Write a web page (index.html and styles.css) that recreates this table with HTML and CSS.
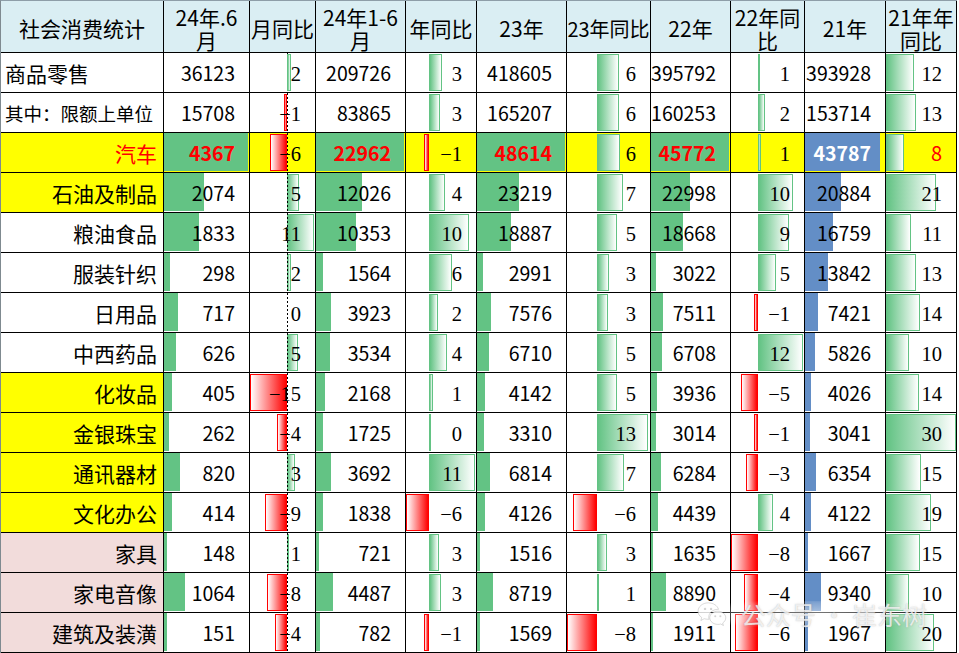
FILE: index.html
```html
<!DOCTYPE html>
<html lang="zh">
<head>
<meta charset="utf-8">
<title>社会消费统计</title>
<link rel="stylesheet" href="styles.css">
</head>
<body>
<div class="sheet">
  <div class="c hd">社会消费统计</div>
  <div class="c hd two">24年.6<br>月</div>
  <div class="c hd">月同比</div>
  <div class="c hd two">24年1-6<br>月</div>
  <div class="c hd">年同比</div>
  <div class="c hd">23年</div>
  <div class="c hd sm">23年同比</div>
  <div class="c hd">22年</div>
  <div class="c hd two">22年同<br>比</div>
  <div class="c hd">21年</div>
  <div class="c hd two">21年年<br>同比</div>

  <!-- 商品零售 -->
  <div class="c cat l">商品零售</div>
  <div class="c num"><span class="v">36123</span></div>
  <div class="c pct"><i class="ax"></i><i class="db pos" style="margin-left:37px;width:4px"></i><span class="v">2</span></div>
  <div class="c num"><span class="v">209726</span></div>
  <div class="c pct"><i class="db pos" style="margin-left:23px;width:13px"></i><span class="v">3</span></div>
  <div class="c num"><span class="v">418605</span></div>
  <div class="c pct"><i class="db pos" style="margin-left:30px;width:22px"></i><span class="v">6</span></div>
  <div class="c num"><span class="v">395792</span></div>
  <div class="c pct"><i class="db pos" style="margin-left:27px;width:2px"></i><span class="v">1</span></div>
  <div class="c num"><span class="v">393928</span></div>
  <div class="c pct"><i class="db pos" style="margin-left:0;width:28px"></i><span class="v">12</span></div>

  <!-- 其中：限额上单位 -->
  <div class="c cat l small">其中：限额上单位</div>
  <div class="c num"><span class="v">15708</span></div>
  <div class="c pct"><i class="db neg" style="margin-left:34px;width:3px"></i><i class="ax"></i><span class="v">−1</span></div>
  <div class="c num"><span class="v">83865</span></div>
  <div class="c pct"><i class="db pos" style="margin-left:23px;width:11px"></i><span class="v">3</span></div>
  <div class="c num"><span class="v">165207</span></div>
  <div class="c pct"><i class="db pos" style="margin-left:30px;width:22px"></i><span class="v">6</span></div>
  <div class="c num"><span class="v">160253</span></div>
  <div class="c pct"><i class="db pos" style="margin-left:27px;width:7px"></i><span class="v">2</span></div>
  <div class="c num"><span class="v">153714</span></div>
  <div class="c pct"><i class="db pos" style="margin-left:0;width:30px"></i><span class="v">13</span></div>

  <!-- 汽车 -->
  <div class="c cat car">汽车</div>
  <div class="c num car"><i class="bar g" style="width:84px"></i><span class="v red">4367</span></div>
  <div class="c pct car"><i class="db neg" style="margin-left:20px;width:17px"></i><i class="ax"></i><span class="v">−6</span></div>
  <div class="c num car"><i class="bar g" style="width:88px"></i><span class="v red">22962</span></div>
  <div class="c pct car"><i class="db neg" style="margin-left:18px;width:5px"></i><span class="v">−1</span></div>
  <div class="c num car"><i class="bar g" style="width:88px"></i><span class="v red">48614</span></div>
  <div class="c pct car"><i class="db pos" style="margin-left:30px;width:23px"></i><span class="v">6</span></div>
  <div class="c num car"><i class="bar g" style="width:78px"></i><span class="v red">45772</span></div>
  <div class="c pct car"><i class="db pos" style="margin-left:27px;width:3px"></i><span class="v">1</span></div>
  <div class="c num car"><i class="bar b" style="width:75px"></i><span class="v wht">43787</span></div>
  <div class="c pct car"><i class="db pos" style="margin-left:0;width:18px"></i><span class="v sans red">8</span></div>

  <!-- 石油及制品 -->
  <div class="c cat y">石油及制品</div>
  <div class="c num"><i class="bar g" style="width:40px"></i><span class="v">2074</span></div>
  <div class="c pct"><i class="db pos" style="margin-left:37px;width:12px"></i><i class="ax"></i><span class="v">5</span></div>
  <div class="c num"><i class="bar g" style="width:46px"></i><span class="v">12026</span></div>
  <div class="c pct"><i class="db pos" style="margin-left:23px;width:16px"></i><span class="v">4</span></div>
  <div class="c num"><i class="bar g" style="width:42px"></i><span class="v">23219</span></div>
  <div class="c pct"><i class="db pos" style="margin-left:30px;width:26px"></i><span class="v">7</span></div>
  <div class="c num"><i class="bar g" style="width:39px"></i><span class="v">22998</span></div>
  <div class="c pct"><i class="db pos" style="margin-left:27px;width:35px"></i><span class="v">10</span></div>
  <div class="c num"><i class="bar b" style="width:36px"></i><span class="v">20884</span></div>
  <div class="c pct"><i class="db pos" style="margin-left:0;width:50px"></i><span class="v">21</span></div>

  <!-- 粮油食品 -->
  <div class="c cat">粮油食品</div>
  <div class="c num"><i class="bar g" style="width:35px"></i><span class="v">1833</span></div>
  <div class="c pct"><i class="db pos" style="margin-left:37px;width:27px"></i><i class="ax"></i><span class="v">11</span></div>
  <div class="c num"><i class="bar g" style="width:40px"></i><span class="v">10353</span></div>
  <div class="c pct"><i class="db pos" style="margin-left:23px;width:40px"></i><span class="v">10</span></div>
  <div class="c num"><i class="bar g" style="width:34px"></i><span class="v">18887</span></div>
  <div class="c pct"><i class="db pos" style="margin-left:30px;width:20px"></i><span class="v">5</span></div>
  <div class="c num"><i class="bar g" style="width:32px"></i><span class="v">18668</span></div>
  <div class="c pct"><i class="db pos" style="margin-left:27px;width:31px"></i><span class="v">9</span></div>
  <div class="c num"><i class="bar b" style="width:28px"></i><span class="v">16759</span></div>
  <div class="c pct"><i class="db pos" style="margin-left:0;width:25px"></i><span class="v">11</span></div>

  <!-- 服装针织 -->
  <div class="c cat">服装针织</div>
  <div class="c num"><i class="bar g" style="width:6px"></i><span class="v">298</span></div>
  <div class="c pct"><i class="db pos" style="margin-left:37px;width:4px"></i><i class="ax"></i><span class="v">2</span></div>
  <div class="c num"><i class="bar g" style="width:7px"></i><span class="v">1564</span></div>
  <div class="c pct"><i class="db pos" style="margin-left:23px;width:23px"></i><span class="v">6</span></div>
  <div class="c num"><i class="bar g" style="width:6px"></i><span class="v">2991</span></div>
  <div class="c pct"><i class="db pos" style="margin-left:30px;width:12px"></i><span class="v">3</span></div>
  <div class="c num"><i class="bar g" style="width:5px"></i><span class="v">3022</span></div>
  <div class="c pct"><i class="db pos" style="margin-left:27px;width:18px"></i><span class="v">5</span></div>
  <div class="c num"><i class="bar b" style="width:23px"></i><span class="v">13842</span></div>
  <div class="c pct"><i class="db pos" style="margin-left:0;width:30px"></i><span class="v">13</span></div>

  <!-- 日用品 -->
  <div class="c cat">日用品</div>
  <div class="c num"><i class="bar g" style="width:14px"></i><span class="v">717</span></div>
  <div class="c pct"><i class="ax"></i><span class="v">0</span></div>
  <div class="c num"><i class="bar g" style="width:15px"></i><span class="v">3923</span></div>
  <div class="c pct"><i class="db pos" style="margin-left:23px;width:9px"></i><span class="v">2</span></div>
  <div class="c num"><i class="bar g" style="width:14px"></i><span class="v">7576</span></div>
  <div class="c pct"><i class="db pos" style="margin-left:30px;width:11px"></i><span class="v">3</span></div>
  <div class="c num"><i class="bar g" style="width:12px"></i><span class="v">7511</span></div>
  <div class="c pct"><i class="db neg" style="margin-left:23px;width:4px"></i><span class="v">−1</span></div>
  <div class="c num"><i class="bar b" style="width:13px"></i><span class="v">7421</span></div>
  <div class="c pct"><i class="db pos" style="margin-left:0;width:34px"></i><span class="v">14</span></div>

  <!-- 中西药品 -->
  <div class="c cat">中西药品</div>
  <div class="c num"><i class="bar g" style="width:12px"></i><span class="v">626</span></div>
  <div class="c pct"><i class="db pos" style="margin-left:37px;width:11px"></i><i class="ax"></i><span class="v">5</span></div>
  <div class="c num"><i class="bar g" style="width:14px"></i><span class="v">3534</span></div>
  <div class="c pct"><i class="db pos" style="margin-left:23px;width:18px"></i><span class="v">4</span></div>
  <div class="c num"><i class="bar g" style="width:12px"></i><span class="v">6710</span></div>
  <div class="c pct"><i class="db pos" style="margin-left:30px;width:20px"></i><span class="v">5</span></div>
  <div class="c num"><i class="bar g" style="width:11px"></i><span class="v">6708</span></div>
  <div class="c pct"><i class="db pos" style="margin-left:27px;width:45px"></i><span class="v">12</span></div>
  <div class="c num"><i class="bar b" style="width:10px"></i><span class="v">5826</span></div>
  <div class="c pct"><i class="db pos" style="margin-left:0;width:23px"></i><span class="v">10</span></div>

  <!-- 化妆品 -->
  <div class="c cat y">化妆品</div>
  <div class="c num"><i class="bar g" style="width:8px"></i><span class="v">405</span></div>
  <div class="c pct"><i class="db neg" style="margin-left:0;width:37px"></i><i class="ax"></i><span class="v">−15</span></div>
  <div class="c num"><i class="bar g" style="width:9px"></i><span class="v">2168</span></div>
  <div class="c pct"><i class="db pos" style="margin-left:23px;width:4px"></i><span class="v">1</span></div>
  <div class="c num"><i class="bar g" style="width:8px"></i><span class="v">4142</span></div>
  <div class="c pct"><i class="db pos" style="margin-left:30px;width:20px"></i><span class="v">5</span></div>
  <div class="c num"><i class="bar g" style="width:6px"></i><span class="v">3936</span></div>
  <div class="c pct"><i class="db neg" style="margin-left:10px;width:17px"></i><span class="v">−5</span></div>
  <div class="c num"><i class="bar b" style="width:6px"></i><span class="v">4026</span></div>
  <div class="c pct"><i class="db pos" style="margin-left:0;width:33px"></i><span class="v">14</span></div>

  <!-- 金银珠宝 -->
  <div class="c cat y">金银珠宝</div>
  <div class="c num"><i class="bar g" style="width:5px"></i><span class="v">262</span></div>
  <div class="c pct"><i class="db neg" style="margin-left:27px;width:10px"></i><i class="ax"></i><span class="v">−4</span></div>
  <div class="c num"><i class="bar g" style="width:7px"></i><span class="v">1725</span></div>
  <div class="c pct"><i class="db pos" style="margin-left:23px;width:1px"></i><span class="v">0</span></div>
  <div class="c num"><i class="bar g" style="width:7px"></i><span class="v">3310</span></div>
  <div class="c pct"><i class="db pos" style="margin-left:30px;width:51px"></i><span class="v">13</span></div>
  <div class="c num"><i class="bar g" style="width:5px"></i><span class="v">3014</span></div>
  <div class="c pct"><i class="db neg" style="margin-left:23px;width:4px"></i><span class="v">−1</span></div>
  <div class="c num"><i class="bar b" style="width:5px"></i><span class="v">3041</span></div>
  <div class="c pct"><i class="db pos" style="margin-left:0;width:70px"></i><span class="v">30</span></div>

  <!-- 通讯器材 -->
  <div class="c cat y">通讯器材</div>
  <div class="c num"><i class="bar g" style="width:16px"></i><span class="v">820</span></div>
  <div class="c pct"><i class="db pos" style="margin-left:37px;width:8px"></i><i class="ax"></i><span class="v">3</span></div>
  <div class="c num"><i class="bar g" style="width:15px"></i><span class="v">3692</span></div>
  <div class="c pct"><i class="db pos" style="margin-left:23px;width:46px"></i><span class="v">11</span></div>
  <div class="c num"><i class="bar g" style="width:13px"></i><span class="v">6814</span></div>
  <div class="c pct"><i class="db pos" style="margin-left:30px;width:27px"></i><span class="v">7</span></div>
  <div class="c num"><i class="bar g" style="width:10px"></i><span class="v">6284</span></div>
  <div class="c pct"><i class="db neg" style="margin-left:15px;width:12px"></i><span class="v">−3</span></div>
  <div class="c num"><i class="bar b" style="width:11px"></i><span class="v">6354</span></div>
  <div class="c pct"><i class="db pos" style="margin-left:0;width:35px"></i><span class="v">15</span></div>

  <!-- 文化办公 -->
  <div class="c cat y">文化办公</div>
  <div class="c num"><i class="bar g" style="width:8px"></i><span class="v">414</span></div>
  <div class="c pct"><i class="db neg" style="margin-left:15px;width:22px"></i><i class="ax"></i><span class="v">−9</span></div>
  <div class="c num"><i class="bar g" style="width:7px"></i><span class="v">1838</span></div>
  <div class="c pct"><i class="db neg" style="margin-left:0;width:23px"></i><span class="v">−6</span></div>
  <div class="c num"><i class="bar g" style="width:8px"></i><span class="v">4126</span></div>
  <div class="c pct"><i class="db neg" style="margin-left:6px;width:24px"></i><span class="v">−6</span></div>
  <div class="c num"><i class="bar g" style="width:7px"></i><span class="v">4439</span></div>
  <div class="c pct"><i class="db pos" style="margin-left:27px;width:15px"></i><span class="v">4</span></div>
  <div class="c num"><i class="bar b" style="width:6px"></i><span class="v">4122</span></div>
  <div class="c pct"><i class="db pos" style="margin-left:0;width:45px"></i><span class="v">19</span></div>

  <!-- 家具 -->
  <div class="c cat p">家具</div>
  <div class="c num"><i class="bar g" style="width:3px"></i><span class="v">148</span></div>
  <div class="c pct"><i class="db pos" style="margin-left:37px;width:2px"></i><i class="ax"></i><span class="v">1</span></div>
  <div class="c num"><i class="bar g" style="width:3px"></i><span class="v">721</span></div>
  <div class="c pct"><i class="db pos" style="margin-left:23px;width:10px"></i><span class="v">3</span></div>
  <div class="c num"><i class="bar g" style="width:3px"></i><span class="v">1516</span></div>
  <div class="c pct"><i class="db pos" style="margin-left:30px;width:10px"></i><span class="v">3</span></div>
  <div class="c num"><i class="bar g" style="width:2px"></i><span class="v">1635</span></div>
  <div class="c pct"><i class="db neg" style="margin-left:0;width:27px"></i><span class="v">−8</span></div>
  <div class="c num"><i class="bar b" style="width:3px"></i><span class="v">1667</span></div>
  <div class="c pct"><i class="db pos" style="margin-left:0;width:34px"></i><span class="v">15</span></div>

  <!-- 家电音像 -->
  <div class="c cat p">家电音像</div>
  <div class="c num"><i class="bar g" style="width:21px"></i><span class="v">1064</span></div>
  <div class="c pct"><i class="db neg" style="margin-left:17px;width:20px"></i><i class="ax"></i><span class="v">−8</span></div>
  <div class="c num"><i class="bar g" style="width:17px"></i><span class="v">4487</span></div>
  <div class="c pct"><i class="db pos" style="margin-left:23px;width:12px"></i><span class="v">3</span></div>
  <div class="c num"><i class="bar g" style="width:16px"></i><span class="v">8719</span></div>
  <div class="c pct"><i class="db pos" style="margin-left:30px;width:2px"></i><span class="v">1</span></div>
  <div class="c num"><i class="bar g" style="width:15px"></i><span class="v">8890</span></div>
  <div class="c pct"><i class="db neg" style="margin-left:13px;width:14px"></i><span class="v">−4</span></div>
  <div class="c num"><i class="bar b" style="width:16px"></i><span class="v">9340</span></div>
  <div class="c pct"><i class="db pos" style="margin-left:0;width:23px"></i><span class="v">10</span></div>

  <!-- 建筑及装潢 -->
  <div class="c cat p">建筑及装潢</div>
  <div class="c num"><i class="bar g" style="width:3px"></i><span class="v">151</span></div>
  <div class="c pct"><i class="db neg" style="margin-left:25px;width:12px"></i><i class="ax"></i><span class="v">−4</span></div>
  <div class="c num"><i class="bar g" style="width:4px"></i><span class="v">782</span></div>
  <div class="c pct"><i class="db neg" style="margin-left:18px;width:5px"></i><span class="v">−1</span></div>
  <div class="c num"><i class="bar g" style="width:3px"></i><span class="v">1569</span></div>
  <div class="c pct"><i class="db neg" style="margin-left:0;width:30px"></i><span class="v">−8</span></div>
  <div class="c num"><i class="bar g" style="width:2px"></i><span class="v">1911</span></div>
  <div class="c pct"><i class="db neg" style="margin-left:4px;width:23px"></i><span class="v">−6</span></div>
  <div class="c num"><i class="bar b" style="width:3px"></i><span class="v">1967</span></div>
  <div class="c pct"><i class="db pos" style="margin-left:0;width:48px"></i><span class="v">20</span></div>

  <div class="wm">
    <svg class="wm-icon" width="30" height="26" viewBox="0 0 32 28">
      <path d="M12 2C5.9 2 1 6 1 11c0 2.8 1.5 5.2 3.9 6.8L4 21l3.6-1.9c1.4.4 2.9.6 4.4.6h.9c-.3-.8-.4-1.6-.4-2.4 0-4.6 4.4-8.3 9.9-8.3h.6C22 5.1 17.5 2 12 2z" fill="rgba(255,255,255,0.8)" stroke="rgba(140,140,140,0.35)" stroke-width="1"/>
      <path d="M22.4 11c-4.9 0-8.8 3.2-8.8 7.1s3.9 7.1 8.8 7.1c1 0 2-.1 2.9-.4l3 1.6-.8-2.7c2-1.3 3.3-3.3 3.3-5.6 0-3.9-3.9-7.1-8.4-7.1z" fill="rgba(255,255,255,0.8)" stroke="rgba(140,140,140,0.35)" stroke-width="1"/>
      <circle cx="8.5" cy="8.5" r="1.3" fill="rgba(170,170,170,0.5)"/>
      <circle cx="15" cy="8.5" r="1.3" fill="rgba(170,170,170,0.5)"/>
      <circle cx="19.5" cy="16.5" r="1.1" fill="rgba(170,170,170,0.5)"/>
      <circle cx="25" cy="16.5" r="1.1" fill="rgba(170,170,170,0.5)"/>
    </svg>
    <span class="wm-text">公众号 · 崔东树</span>
  </div>
</div>
</body>
</html>
```

FILE: styles.css
```css
* { box-sizing: border-box; }

html, body {
  margin: 0;
  padding: 0;
  background: #ffffff;
}

body {
  font-family: "Noto Sans CJK SC", "Noto Sans", sans-serif;
  color: #000;
}

.sheet {
  position: relative;
  display: grid;
  grid-template-columns: 163px 86px 66px 90px 71px 90px 84px 80px 74px 81px 71px;
  grid-template-rows: 52px repeat(15, 40px);
  width: 957px;
  border-top: 1px solid #8e9ea8;
  border-left: 1px solid #7f8a90;
}

.c {
  border-right: 1px solid #000;
  border-bottom: 1px solid #000;
  background: #fff;
  overflow: hidden;
}

/* header */
.hd {
  background: #daeef3;
  display: flex;
  align-items: center;
  justify-content: center;
  text-align: center;
  font-size: 21px;
  line-height: 23px;
  padding-top: 3px;
  white-space: nowrap;
}
.hd.two { padding-top: 5px; }
.hd.sm { font-size: 20px; }

/* category column */
.cat {
  display: flex;
  align-items: center;
  justify-content: flex-end;
  padding: 2px 6px 0 0;
  font-size: 21px;
  line-height: 1;
  white-space: nowrap;
}
.cat.l { justify-content: flex-start; padding-left: 4px; }
.cat.small { font-size: 18.5px; }
.cat.y { background: #ffff00; }
.cat.p { background: #f2dcdb; }
.cat.car { background: #ffff00; color: #ff0000; }

/* value cells: bar and text stacked in one grid area */
.num, .pct {
  display: grid;
  grid-template-columns: 100%;
  grid-template-rows: 100%;
}
.num > *, .pct > * { grid-area: 1 / 1; }
.car { background: #ffff00; }

.bar {
  display: block;
  justify-self: start;
  margin: 0 0 1px 0;
}
.bar.g { background: #63c384; }
.bar.b { background: #638ec6; }

.db {
  display: block;
  justify-self: start;
  margin-top: 1px;
  margin-bottom: 1px;
}
.db.pos {
  background: linear-gradient(to right, #63c384, #ffffff);
  border: 1px solid #63c384;
}
.db.neg {
  background: linear-gradient(to left, #ff0000, #ffffff);
  border: 1px solid #ff0000;
}

.ax {
  display: block;
  justify-self: start;
  width: 1px;
  margin-left: 37px;
  background: repeating-linear-gradient(to bottom, #000 0 2px, transparent 2px 4px);
}

.v {
  align-self: center;
  justify-self: end;
  white-space: nowrap;
  position: relative;
}
.num .v {
  font-size: 19.5px;
  line-height: 1;
  padding: 1px 14px 0 0;
}
.pct .v {
  font-family: "Liberation Serif", "Times New Roman", serif;
  font-size: 20.5px;
  line-height: 1;
  padding: 3px 14px 0 0;
}
.pct .v.sans {
  font-family: "Noto Sans CJK SC", "Noto Sans", sans-serif;
  font-size: 20px;
  padding-top: 1px;
}
.v.red { color: #ff0000; font-weight: bold; }
.v.wht { color: #ffffff; font-weight: bold; }
.pct .v.red { font-weight: normal; }

/* watermark overlay */
.wm {
  position: absolute;
  right: 30px;
  bottom: 26px;
  display: flex;
  align-items: center;
  gap: 14px;
  background: radial-gradient(ellipse at center, rgba(255,255,255,0.5) 0%, rgba(255,255,255,0.2) 60%, rgba(255,255,255,0) 80%);
  pointer-events: none;
}
.wm-text {
  font-family: "Noto Sans CJK SC", sans-serif;
  font-size: 25px;
  line-height: 1;
  color: rgba(255,255,255,0.75);
  text-shadow: 0 0 1px rgba(110,110,110,0.4), 0 0 3px rgba(110,110,110,0.15);
}
```
